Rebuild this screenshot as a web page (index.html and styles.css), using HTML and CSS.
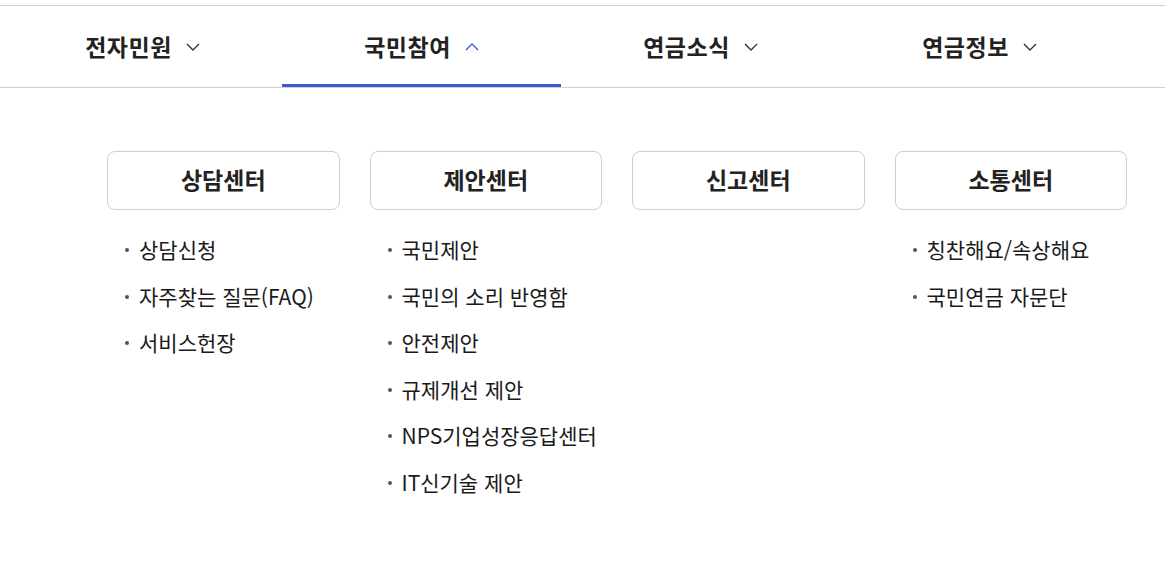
FILE: index.html
```html
<!DOCTYPE html>
<html lang="ko">
<head>
  <meta charset="UTF-8" />
  <title>국민참여</title>
  <link rel="stylesheet" href="styles.css">
</head>
<body>
  <nav class="gnb">
    <ul class="gnb-list">
      <li class="gnb-item">전자민원
        <svg class="arrow" width="14" height="8" viewBox="0 0 14 8"><path d="M1 1l6 6 6-6" fill="none" stroke="#333" stroke-width="1.4"/></svg>
      </li>
      <li class="gnb-item active">국민참여
        <svg class="arrow" width="14" height="8" viewBox="0 0 14 8"><path d="M1 7l6-6 6 6" fill="none" stroke="#3d5cc8" stroke-width="1.4"/></svg>
      </li>
      <li class="gnb-item">연금소식
        <svg class="arrow" width="14" height="8" viewBox="0 0 14 8"><path d="M1 1l6 6 6-6" fill="none" stroke="#333" stroke-width="1.4"/></svg>
      </li>
      <li class="gnb-item">연금정보
        <svg class="arrow" width="14" height="8" viewBox="0 0 14 8"><path d="M1 1l6 6 6-6" fill="none" stroke="#333" stroke-width="1.4"/></svg>
      </li>
    </ul>
  </nav>

  <div class="depth">
    <div class="group">
      <div class="group-title">상담센터</div>
      <ul class="sub-list">
        <li>상담신청</li>
        <li>자주찾는 질문(FAQ)</li>
        <li>서비스헌장</li>
      </ul>
    </div>
    <div class="group">
      <div class="group-title">제안센터</div>
      <ul class="sub-list">
        <li>국민제안</li>
        <li>국민의 소리 반영함</li>
        <li>안전제안</li>
        <li>규제개선 제안</li>
        <li>NPS기업성장응답센터</li>
        <li>IT신기술 제안</li>
      </ul>
    </div>
    <div class="group">
      <div class="group-title">신고센터</div>
    </div>
    <div class="group">
      <div class="group-title">소통센터</div>
      <ul class="sub-list">
        <li>칭찬해요/속상해요</li>
        <li>국민연금 자문단</li>
      </ul>
    </div>
  </div>
</body>
</html>
```

FILE: styles.css
```css
body {
  margin: 0;
  font-family: "Noto Sans CJK KR", "Noto Sans", sans-serif;
  background-color: #fff;
  color: #222;
}
ul {
  margin: 0;
  padding: 0;
  list-style: none;
}
.gnb {
  margin-top: 5px;
  border-top: 1px solid #cfcfcf;
  border-bottom: 1px solid #cfcfcf;
}
.gnb-list {
  display: flex;
  padding-left: 3px;
}
.gnb-item {
  position: relative;
  width: 279px;
  height: 79px;
  padding-bottom: 2px;
  display: flex;
  align-items: center;
  justify-content: center;
  gap: 14px;
  font-size: 23px;
  font-weight: bold;
  letter-spacing: 0.5px;
  color: #222;
}
.gnb-item .arrow {
  margin-top: 2px;
}
.gnb-item.active::after {
  content: "";
  position: absolute;
  left: 0;
  right: 0;
  bottom: 0;
  height: 3px;
  background-color: #3d5cc8;
}
.depth {
  display: grid;
  grid-template-columns: repeat(4, 1fr);
  column-gap: 30px;
  width: 1020px;
  margin: 63px 0 0 107px;
}
.group-title {
  height: 54px;
  padding-bottom: 3px;
  border: 1px solid #cfcfcf;
  border-radius: 8px;
  display: flex;
  align-items: center;
  justify-content: center;
  font-size: 23px;
  font-weight: bold;
}
.sub-list {
  margin-top: 16px;
  padding-left: 32px;
}
.sub-list li {
  position: relative;
  height: 46.6px;
  line-height: 46.6px;
  font-size: 21px;
  color: #1a1a1a;
}
.sub-list li::before {
  content: "";
  position: absolute;
  left: -14px;
  top: 22px;
  width: 4px;
  height: 4px;
  border-radius: 50%;
  background-color: #555;
}
```
